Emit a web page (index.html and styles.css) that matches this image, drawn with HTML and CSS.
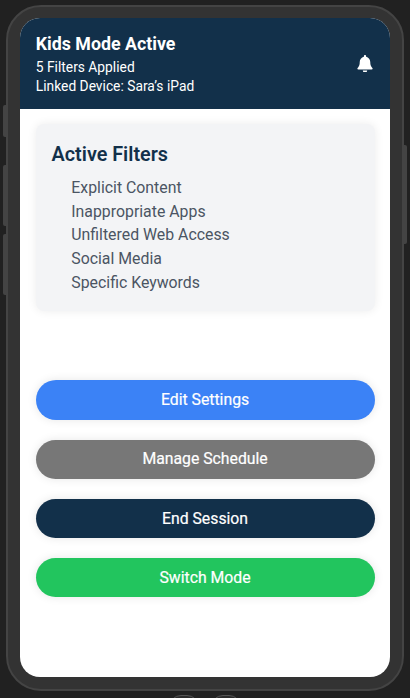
FILE: index.html
```html
<!DOCTYPE html>
<html lang="en">
<head>
<meta charset="utf-8">
<title>Kids Mode</title>
<link rel="stylesheet" href="styles.css">
</head>
<body>
<div class="device">
  <span class="key key-mute"></span>
  <span class="key key-up"></span>
  <span class="key key-down"></span>
  <span class="key key-power"></span>
  <main class="screen">
    <header class="header">
      <div>
        <h1 class="title">Kids Mode Active</h1>
        <p class="meta">5 Filters Applied</p>
        <p class="meta">Linked Device: Sara’s iPad</p>
      </div>
      <svg class="bell" viewBox="0 0 448 512" fill="#fff" aria-hidden="true"><path d="M224 0c-17.700 0-32 14.300-32 32v19.200C119 66 70 130.600 70 208v18.800c0 47-15 95-43 128l-17 20C-8 397 0 422 32 422h384c32 0 40-25 22-47l-17-20C393 322 378 273.900 378 226.800V208c0-77.400-49-142-122-156.800V32c0-17.700-14.300-32-32-32zM288 448H160c0 37 30 64 64 64s64-27 64-64z"/></svg>
    </header>
    <section class="card">
      <h2 class="card-title">Active Filters</h2>
      <ul class="filters">
        <li>Explicit Content</li>
        <li>Inappropriate Apps</li>
        <li>Unfiltered Web Access</li>
        <li>Social Media</li>
        <li>Specific Keywords</li>
      </ul>
    </section>
    <div class="actions">
      <button class="btn blue">Edit Settings</button>
      <button class="btn gray">Manage Schedule</button>
      <button class="btn navy">End Session</button>
      <button class="btn green">Switch Mode</button>
    </div>
  </main>
</div>
<div class="dock"><span></span><span></span></div>
</body>
</html>
```
FILE: styles.css
```css
* { box-sizing: border-box; margin: 0; padding: 0; }
body {
  height: 698px;
  overflow: hidden;
  padding: 4.500px 6px 0;
  background: #212121;
  font-family: Roboto, "Liberation Sans", sans-serif;
}
.device {
  position: relative;
  height: 686.300px;
  padding: 11.800px 12px 12px;
  border: 2px solid #444;
  border-radius: 35px;
  background: #333;
}
.key { position: absolute; width: 3px; background: #444; }
.key-mute, .key-up, .key-down { left: -5px; border-radius: 2px 0 0 2px; }
.key-mute { top: 98.500px; height: 32px; }
.key-up { top: 158px; height: 61px; }
.key-down { top: 227px; height: 61px; }
.key-power { right: -5px; top: 138px; height: 99px; border-radius: 0 2px 2px 0; }
.screen {
  display: flex;
  flex-direction: column;
  height: 658.500px;
  border-radius: 20px;
  overflow: hidden;
  background: #fff;
}
.header {
  display: flex;
  justify-content: space-between;
  align-items: center;
  height: 90.500px;
  padding: 0 15.800px;
  background: #12304a;
  color: #fff;
}
.title { font-size: 17.800px; line-height: 27.600px; font-weight: 700; }
.meta { font-size: 13.810px; line-height: 19.300px; }
.bell { width: 16px; height: 17.600px; margin-right: 1px; }
.card {
  margin: 15px 15px 0 15.800px;
  height: 187.200px;
  padding: 17.300px 15.800px 15px;
  border-radius: 8px;
  background: #f3f4f6;
  box-shadow: 0 0 10px rgba(0, 0, 0, .08);
}
.card-title { font-size: 19.800px; line-height: 27.600px; font-weight: 600; color: #12304a; }
.filters {
  margin-top: 7.300px;
  padding-left: 19.700px;
  list-style: none;
  font-size: 15.850px;
  line-height: 23.680px;
  color: #4b5563;
}
.actions {
  display: grid;
  gap: 19.730px;
  margin: 69.400px 15.500px 0 15.600px;
}
.btn {
  height: 39.470px;
  border: 0;
  border-radius: 20px;
  box-shadow: 0 0 10px rgba(0, 0, 0, .1);
  font: 400 15.790px/23.680px Roboto, "Liberation Sans", sans-serif;
  -webkit-text-stroke: .2px #fff;
  color: #fff;
}
.blue { background: #3b82f6; }
.gray { background: #777; }
.navy { background: #12304a; }
.green { background: #22c55e; }
.dock {
  display: flex;
  justify-content: center;
  gap: 12px;
  margin-top: 4px;
}
.dock span {
  width: 30px;
  height: 30px;
  border: 1px solid #555;
  border-radius: 12px;
  background: #2b2b2b;
}
```
